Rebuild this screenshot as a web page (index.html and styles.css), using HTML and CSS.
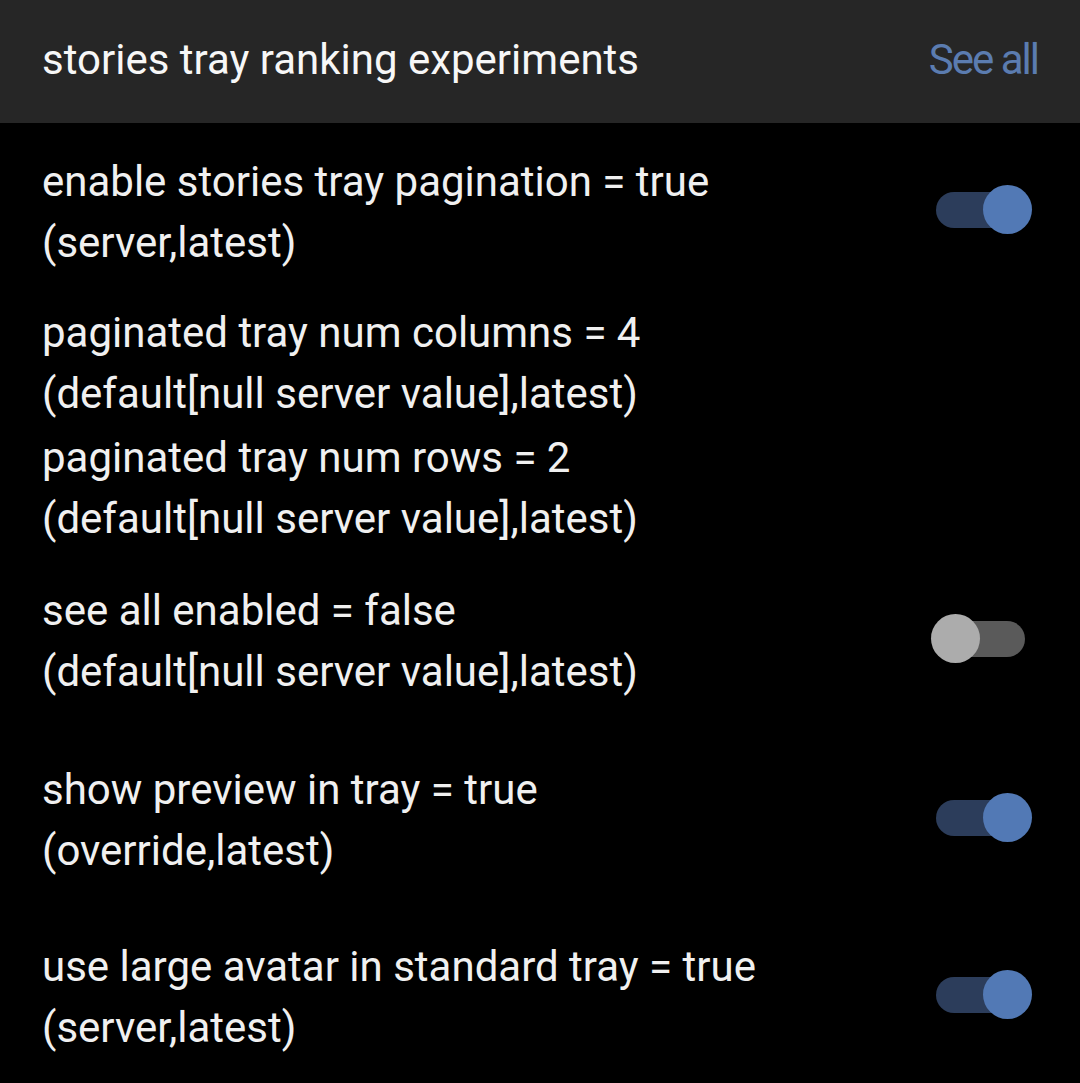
FILE: index.html
```html
<!DOCTYPE html>
<html lang="en">
<head>
<meta charset="utf-8">
<title>stories tray ranking experiments</title>
<link rel="stylesheet" href="styles.css">
</head>
<body>
<header class="header">
  <h1 class="title">stories tray ranking experiments</h1>
  <a class="see-all" href="#">See all</a>
</header>
<main class="list">
  <div class="row row-1">
    <div class="label">
      <div class="line">enable stories tray pagination = true</div>
      <div class="line">(server,latest)</div>
    </div>
    <div class="switch on"><span class="track"></span><span class="knob"></span></div>
  </div>
  <div class="row row-2">
    <div class="label">
      <div class="line">paginated tray num columns = 4</div>
      <div class="line">(default[null server value],latest)</div>
    </div>
  </div>
  <div class="row row-3">
    <div class="label">
      <div class="line">paginated tray num rows = 2</div>
      <div class="line">(default[null server value],latest)</div>
    </div>
  </div>
  <div class="row row-4">
    <div class="label">
      <div class="line">see all enabled = false</div>
      <div class="line">(default[null server value],latest)</div>
    </div>
    <div class="switch off"><span class="track"></span><span class="knob"></span></div>
  </div>
  <div class="row row-5">
    <div class="label">
      <div class="line">show preview in tray = true</div>
      <div class="line">(override,latest)</div>
    </div>
    <div class="switch on"><span class="track"></span><span class="knob"></span></div>
  </div>
  <div class="row row-6">
    <div class="label">
      <div class="line">use large avatar in standard tray = true</div>
      <div class="line">(server,latest)</div>
    </div>
    <div class="switch on"><span class="track"></span><span class="knob"></span></div>
  </div>
</main>
</body>
</html>
```
FILE: styles.css
```css
* { box-sizing: border-box; }
html, body {
  margin: 0;
  padding: 0;
  background: #000;
  height: 1083px;
  overflow: hidden;
}
body {
  font-family: Roboto, "Noto Sans", sans-serif;
  color: #f0f0f0;
}
.header {
  height: 123px;
  background: #262626;
  display: flex;
  align-items: center;
  justify-content: space-between;
  padding: 0 42px 4px 42px;
}
.title {
  margin: 0;
  font-size: 42px;
  font-weight: 400;
  color: #f7f7f7;
  line-height: 1;
}
.see-all {
  font-size: 42px;
  letter-spacing: -2px;
  color: #5b7cb0;
  text-decoration: none;
  line-height: 1;
}
.list {
  padding: 0 42px 0 42px;
}
.row {
  display: flex;
  align-items: center;
  justify-content: space-between;
}
.line {
  font-size: 42px;
  line-height: 61px;
  white-space: nowrap;
}
.row-1 { margin-top: 28px; }
.row-2 { margin-top: 29px; }
.row-3 { margin-top: 3px; }
.row-4 { margin-top: 31px; }
.row-5 { margin-top: 57px; }
.row-6 { margin-top: 55px; }

.switch {
  position: relative;
  width: 101px;
  height: 49px;
  margin-right: 6px;
  margin-bottom: 5px;
}
.switch .track {
  position: absolute;
  left: 5px;
  top: 7px;
  width: 89px;
  height: 36px;
  border-radius: 18px;
}
.switch .knob {
  position: absolute;
  top: 0;
  width: 49px;
  height: 49px;
  border-radius: 50%;
}
.switch.on .track { background: #2c3d5b; }
.switch.on .knob { background: #5279b5; right: 0; }
.switch.off .track { background: #5a5a5a; }
.switch.off .knob { background: #acacac; left: 0; }
```
